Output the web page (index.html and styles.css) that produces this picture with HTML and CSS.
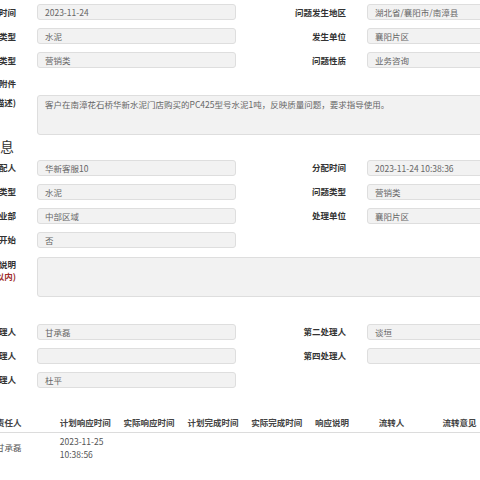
FILE: index.html
```html
<!DOCTYPE html>
<html lang="zh-CN">
<head>
    <meta charset="UTF-8">
    <meta name="viewport" content="width=device-width, initial-scale=1.0">
    <title>问题工单详情</title>
    <link rel="stylesheet" href="styles.css">
</head>
<body>
<div class="page">
    <!-- 问题信息 -->
    <div class="form-grid">
        <div class="field">
            <span class="label">发生时间</span>
            <div class="input">2023-11-24</div>
        </div>
        <div class="field">
            <span class="label">问题发生地区</span>
            <div class="input">湖北省/襄阳市/南漳县</div>
        </div>
        <div class="field">
            <span class="label">产品类型</span>
            <div class="input">水泥</div>
        </div>
        <div class="field">
            <span class="label">发生单位</span>
            <div class="input">襄阳片区</div>
        </div>
        <div class="field">
            <span class="label">问题类型</span>
            <div class="input">营销类</div>
        </div>
        <div class="field">
            <span class="label">问题性质</span>
            <div class="input">业务咨询</div>
        </div>
        <div class="field">
            <span class="label">附件</span>
        </div>
    </div>

    <div class="field field-full desc-row">
        <span class="label">问题描述(详细描述)</span>
        <div class="textarea">客户在南漳花石桥华新水泥门店购买的PC425型号水泥1吨，反映质量问题，要求指导使用。</div>
    </div>

    <!-- 分配信息 -->
    <h2 class="section-title">分配信息</h2>
    <div class="form-grid">
        <div class="field">
            <span class="label">分配人</span>
            <div class="input">华新客服10</div>
        </div>
        <div class="field">
            <span class="label">分配时间</span>
            <div class="input">2023-11-24 10:38:36</div>
        </div>
        <div class="field">
            <span class="label">产品类型</span>
            <div class="input">水泥</div>
        </div>
        <div class="field">
            <span class="label">问题类型</span>
            <div class="input">营销类</div>
        </div>
        <div class="field">
            <span class="label">处理事业部</span>
            <div class="input">中部区域</div>
        </div>
        <div class="field">
            <span class="label">处理单位</span>
            <div class="input">襄阳片区</div>
        </div>
        <div class="field">
            <span class="label">是否重新开始</span>
            <div class="input">否</div>
        </div>
    </div>

    <div class="field field-full note-row">
        <span class="label">分配说明<br><em class="hint">(200字以内)</em></span>
        <div class="textarea"></div>
    </div>

    <!-- 处理人 -->
    <div class="form-grid handlers">
        <div class="field">
            <span class="label">第一处理人</span>
            <div class="input">甘承磊</div>
        </div>
        <div class="field">
            <span class="label">第二处理人</span>
            <div class="input">谈垣</div>
        </div>
        <div class="field">
            <span class="label">第三处理人</span>
            <div class="input"></div>
        </div>
        <div class="field">
            <span class="label">第四处理人</span>
            <div class="input"></div>
        </div>
        <div class="field">
            <span class="label">第五处理人</span>
            <div class="input">杜平</div>
        </div>
    </div>

    <!-- 处理记录 -->
    <div class="record-table">
        <div class="th">责任人</div>
        <div class="th">计划响应时间</div>
        <div class="th">实际响应时间</div>
        <div class="th">计划完成时间</div>
        <div class="th">实际完成时间</div>
        <div class="th">响应说明</div>
        <div class="th">流转人</div>
        <div class="th">流转意见</div>

        <div class="td">甘承磊</div>
        <div class="td">2023-11-25<br>10:38:56</div>
        <div class="td"></div>
        <div class="td"></div>
        <div class="td"></div>
        <div class="td"></div>
        <div class="td"></div>
        <div class="td"></div>
    </div>
</div>
</body>
</html>
```

FILE: styles.css
```css
* {
    margin: 0;
    padding: 0;
    box-sizing: border-box;
}

body {
    font-family: "Noto Sans CJK SC", "Noto Sans", sans-serif;
    font-size: 8.5px;
    color: #333;
    background-color: #fff;
    overflow: hidden;
}

/* 页面整体向左偏移，左侧标签只露出一部分 */
.page {
    margin-left: -94px;
    padding-top: 4px;
    width: 700px;
}

/* 两列表单 */
.form-grid {
    display: grid;
    grid-template-columns: 330px 330px;
    row-gap: 8px;
}

.field {
    display: flex;
    align-items: center;
    min-height: 15.5px;
}

.label {
    flex: 0 0 110px;
    margin-right: 21px;
    text-align: right;
    font-weight: bold;
    color: #333;
    line-height: 1.5;
    white-space: nowrap;
}

.hint {
    font-style: normal;
    color: #a0302c;
}

.input {
    width: 199px;
    height: 16px;
    padding: 0 7px;
    line-height: 14px;
    background-color: #f2f2f2;
    border: 1px solid #dedede;
    border-radius: 3px;
    color: #666;
    white-space: nowrap;
    overflow: hidden;
}

/* 整行的多行文本框 */
.field-full {
    align-items: flex-start;
}

.field-full .label {
    padding-top: 1px;
}

.textarea {
    width: 529px;
    height: 40px;
    padding: 2px 7px;
    line-height: 12px;
    background-color: #f2f2f2;
    border: 1px solid #dedede;
    border-radius: 3px;
    color: #666;
}

.desc-row {
    margin-top: 3px;
}

.section-title {
    font-size: 14px;
    font-weight: normal;
    color: #333;
    padding-left: 52px;
    margin: 2px 0 5px;
    line-height: 18px;
}

.note-row {
    margin-top: 9px;
}

.handlers {
    margin-top: 27px;
}

/* 处理记录表 */
.record-table {
    display: grid;
    grid-template-columns: repeat(8, 63.8px);
    margin-top: 28px;
    margin-left: 90px;
}

.th {
    font-weight: bold;
    color: #444;
    line-height: 12px;
    padding-bottom: 4px;
    border-bottom: 1px solid #dcdcdc;
    white-space: nowrap;
}

.td {
    color: #555;
    line-height: 13px;
    padding-top: 2px;
    align-self: center;
}
```
